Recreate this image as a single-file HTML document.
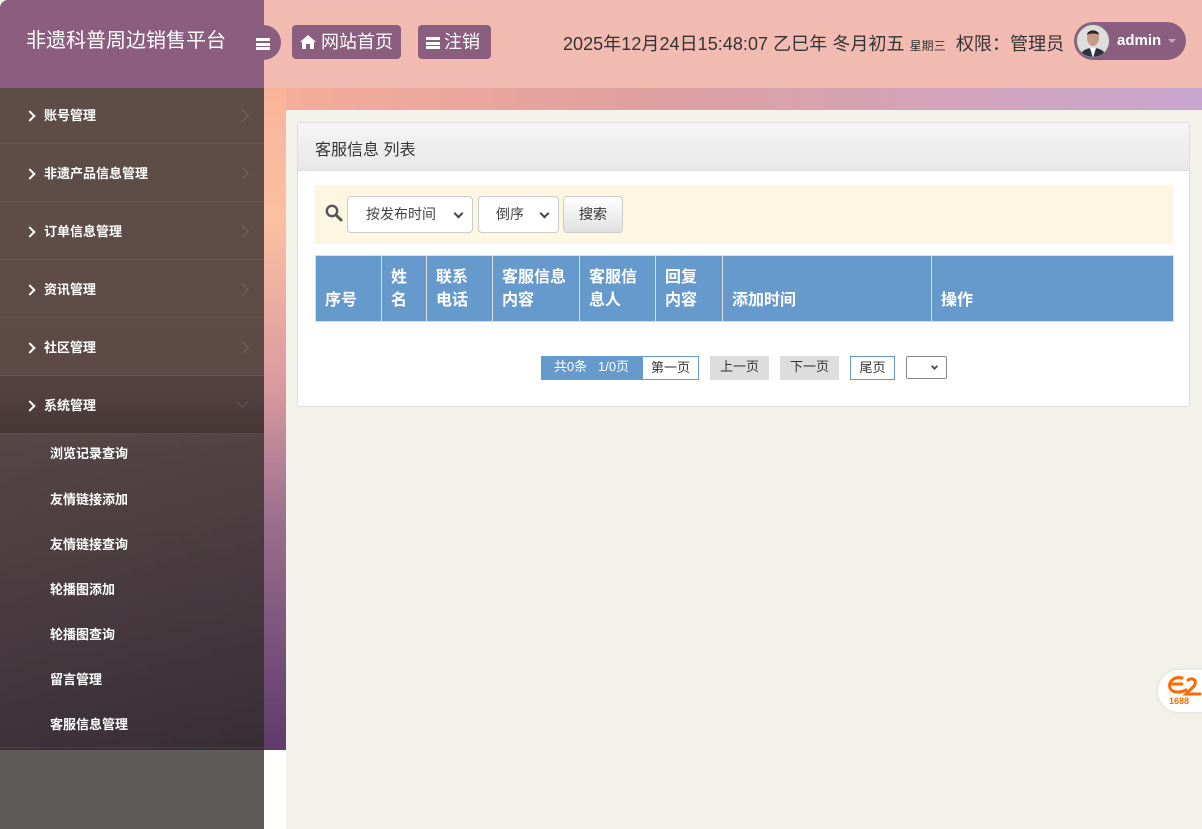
<!DOCTYPE html>
<html><head><meta charset="utf-8">
<style>
*{margin:0;padding:0;box-sizing:border-box}
body{width:1202px;height:829px;overflow:hidden;position:relative;background:#f2f1ea;font-family:"Liberation Sans","Noto Sans CJK SC",sans-serif;}
.abs{position:absolute}
#top{left:0;top:0;width:1202px;height:88px;background:#f2bbb2;border-top-left-radius:8px}
#brand{left:0;top:0;width:264px;height:88px;background:#8b5d7e;border-top-left-radius:8px;color:#fff;font-size:20px;padding:24px 0 0 26px}
#tog{left:244px;top:25px;width:37px;height:35px;background:#8b5d7e;border-radius:0 18px 18px 0}
.btn{background:#8b5d7e;color:#fff;font-size:18px;border-radius:4px;height:34px;top:25px;line-height:34px;padding-left:8px}
.ham{display:inline-block;width:14px;height:12px;border-top:3px solid #fff;border-bottom:3px solid #fff;position:relative;vertical-align:-1px;margin-right:4px}
.ham:after{content:"";position:absolute;left:0;top:1.5px;width:14px;height:3px;background:#fff}
#date{left:563px;top:30px;font-size:18px;color:#333;white-space:nowrap;letter-spacing:0.05px}
#user{left:1074px;top:22px;width:112px;height:38px;border-radius:19px;background:#8b5d7e}
#strip{left:264px;top:88px;width:938px;height:22px;background:linear-gradient(90deg,#f6ae99,#dfa0a0 40%,#c8a6cf)}
#vstrip{left:264px;top:88px;width:22px;height:662px;background:linear-gradient(180deg,#f8b49a,#fcc0a0 20%,#d89aa0 45%,#9c6f8e 65%,#5d3b6c)}
#side{left:0;top:88px;width:264px;height:662px;background:linear-gradient(180deg,#5e4d46 0%,#5d4a47 45%,#473a3d 55%,#3c3038 100%)}
#sidebot{left:0;top:750px;width:264px;height:79px;background:#5f5b59}
#wbot{left:264px;top:750px;width:22px;height:79px;background:#fff}
.mi{position:absolute;left:0;width:264px;height:58px;border-bottom:1px solid rgba(255,255,255,.07);color:#fff;font-size:13px;font-weight:bold;line-height:60px;padding-left:44px}
.mi:before{content:"";position:absolute;left:26px;top:26px;width:6px;height:6px;border-top:2px solid #fff;border-right:2px solid #fff;transform:rotate(45deg)}
.mi:after{content:"";position:absolute;left:238px;top:25px;width:8px;height:8px;border-top:1px solid rgba(255,255,255,.15);border-right:1px solid rgba(255,255,255,.15);transform:rotate(45deg)}
.mi.open:after{transform:rotate(135deg);top:21px}
.si{position:absolute;left:50px;color:#fff;font-size:13px;font-weight:bold}
#panel{left:297px;top:122px;width:893px;height:285px;background:#fff;border:1px solid #ddd;border-radius:3px}
#ph{left:0;top:0;width:891px;height:48px;background:linear-gradient(#f5f5f5,#e8e8e8);border-bottom:1px solid #ddd;font-size:16px;color:#333;padding:13px 0 0 17px}
#sb{left:17px;top:62px;width:858px;height:59px;background:#fdf6e3}
.sel{top:11px;height:37px;border:1px solid #ccc;border-radius:4px;background:#fff;font-size:14px;color:#444;line-height:35px}
.sel:after{content:"";position:absolute;right:10px;top:13px;width:5px;height:5px;border-right:2px solid #444;border-bottom:2px solid #444;transform:rotate(45deg)}
table{position:absolute;left:17px;top:132px;border-collapse:collapse;width:859px}
th{background:#6699cc;color:#fff;font-size:16px;text-align:left;vertical-align:bottom;border:1px solid #ddd;padding:0 9px 9px 9px;height:66px;line-height:23px}
.pg{top:233px;height:24px;font-size:13px;line-height:22px;text-align:center}
</style></head><body>
<div id="top" class="abs"></div>
<div id="brand" class="abs">非遗科普周边销售平台</div>
<div id="tog" class="abs"><span class="ham abs" style="left:12px;top:11px"></span></div>
<div class="abs btn" style="left:292px;width:109px"><svg width="16" height="14" viewBox="0 0 16 14" style="vertical-align:-1px"><path d="M8 0L0 7h2v7h4V9h4v5h4V7h2z" fill="#fff"/></svg> 网站首页</div>
<div class="abs btn" style="left:418px;width:73px"><span class="ham"></span>注销</div>
<div id="date" class="abs">2025年12月24日15:48:07 乙巳年 冬月初五 <span style="font-size:12px">星期三</span> &nbsp;权限：管理员</div>
<div id="user" class="abs">
<svg class="abs" style="left:2px;top:2px" width="34" height="34" viewBox="0 0 34 34"><circle cx="17" cy="17" r="16.5" fill="#ddd" stroke="#777"/><clipPath id="c"><circle cx="17" cy="17" r="16"/></clipPath><g clip-path="url(#c)"><path d="M3 34c2-8 8-10 14-10s12 2 14 10z" fill="#2d3342"/><path d="M14 24l3 10 3-10z" fill="#fff"/><ellipse cx="17" cy="14" rx="6" ry="8" fill="#c79a82"/><path d="M11 11c0-6 12-6 12 0-2-2-10-2-12 0z" fill="#2a2222"/></g></svg>
<span class="abs" style="left:43px;top:10px;color:#fff;font-size:15px;font-weight:bold">admin</span>
<span class="abs" style="left:94px;top:17px;border:4px solid transparent;border-top-color:#c9a9bd"></span>
</div>
<div id="strip" class="abs"></div>
<div id="side" class="abs">
<div class="mi" style="top:-2px">账号管理</div>
<div class="mi" style="top:56px">非遗产品信息管理</div>
<div class="mi" style="top:114px">订单信息管理</div>
<div class="mi" style="top:172px">资讯管理</div>
<div class="mi" style="top:230px">社区管理</div>
<div class="mi open" style="top:288px;background:rgba(0,0,0,.1)">系统管理</div>
<div class="abs" style="left:0;top:345px;width:264px;height:316px;background:linear-gradient(160deg,rgba(100,80,80,.5),rgba(40,35,45,.2))"></div>
<div class="si" style="top:355px">浏览记录查询</div>
<div class="si" style="top:401px">友情链接添加</div>
<div class="si" style="top:446px">友情链接查询</div>
<div class="si" style="top:491px">轮播图添加</div>
<div class="si" style="top:536px">轮播图查询</div>
<div class="si" style="top:581px">留言管理</div>
<div class="si" style="top:626px">客服信息管理</div>
<div class="abs" style="left:0;top:659px;width:264px;height:1px;background:rgba(255,255,255,.08)"></div>
</div>
<div id="vstrip" class="abs"></div>
<div id="sidebot" class="abs"></div>
<div id="wbot" class="abs"></div>
<div id="panel" class="abs">
<div id="ph" class="abs">客服信息 列表</div>
<div id="sb" class="abs">
<svg class="abs" style="left:10px;top:19px" width="18" height="18" viewBox="0 0 18 18"><circle cx="7" cy="7" r="5.2" fill="none" stroke="#555" stroke-width="2.4"/><path d="M11 11l5 5" stroke="#555" stroke-width="3" stroke-linecap="round"/></svg>
<div class="abs sel" style="left:32px;width:126px;padding-left:18px">按发布时间</div>
<div class="abs sel" style="left:163px;width:81px;padding-left:17px">倒序</div>
<div class="abs" style="left:248px;top:11px;width:60px;height:37px;border:1px solid #ccc;border-radius:4px;background:linear-gradient(#fff,#e0e0e0);font-size:14px;line-height:35px;text-align:center;color:#333">搜索</div>
</div>
<table><tr><th style="width:66px">序号</th><th style="width:45px">姓<br>名</th><th style="width:66px">联系<br>电话</th><th style="width:87px">客服信息<br>内容</th><th style="width:76px">客服信<br>息人</th><th style="width:67px">回复<br>内容</th><th style="width:209px">添加时间</th><th>操作</th></tr></table>
<div class="abs pg" style="left:243px;width:101px;background:#6699cc;color:#fff">共0条 &nbsp; 1/0页</div>
<div class="abs pg" style="left:344px;width:57px;border:1px solid #6699cc;color:#333">第一页</div>
<div class="abs pg" style="left:412px;width:59px;background:#ddd;color:#333">上一页</div>
<div class="abs pg" style="left:482px;width:59px;background:#ddd;color:#333">下一页</div>
<div class="abs pg" style="left:552px;width:45px;border:1px solid #6699cc;color:#333">尾页</div>
<div class="abs pg" style="left:608px;width:41px;height:23px;border:1px solid #888;border-radius:2px"><span class="abs" style="right:9px;top:7px;width:5px;height:5px;border-right:2px solid #555;border-bottom:2px solid #555;transform:rotate(45deg)"></span></div>
</div>
<div class="abs" style="left:1158px;top:670px;width:50px;height:42px;background:#fff;border-radius:21px 0 0 21px;box-shadow:0 0 4px rgba(0,0,0,.1)">
<svg class="abs" style="left:6px;top:4px" width="38" height="24" viewBox="0 0 38 24"><path d="M18 4C10 2 4 8 6 14c2 5 10 5 16 2M8 10h10M24 6c4-3 10 0 6 6l-8 8h14" fill="none" stroke="#ff6a00" stroke-width="3" stroke-linecap="round"/></svg>
<span class="abs" style="left:11px;top:26px;font-size:9px;font-weight:bold;color:#ff6a00">1688</span>
</div>
</body></html>
